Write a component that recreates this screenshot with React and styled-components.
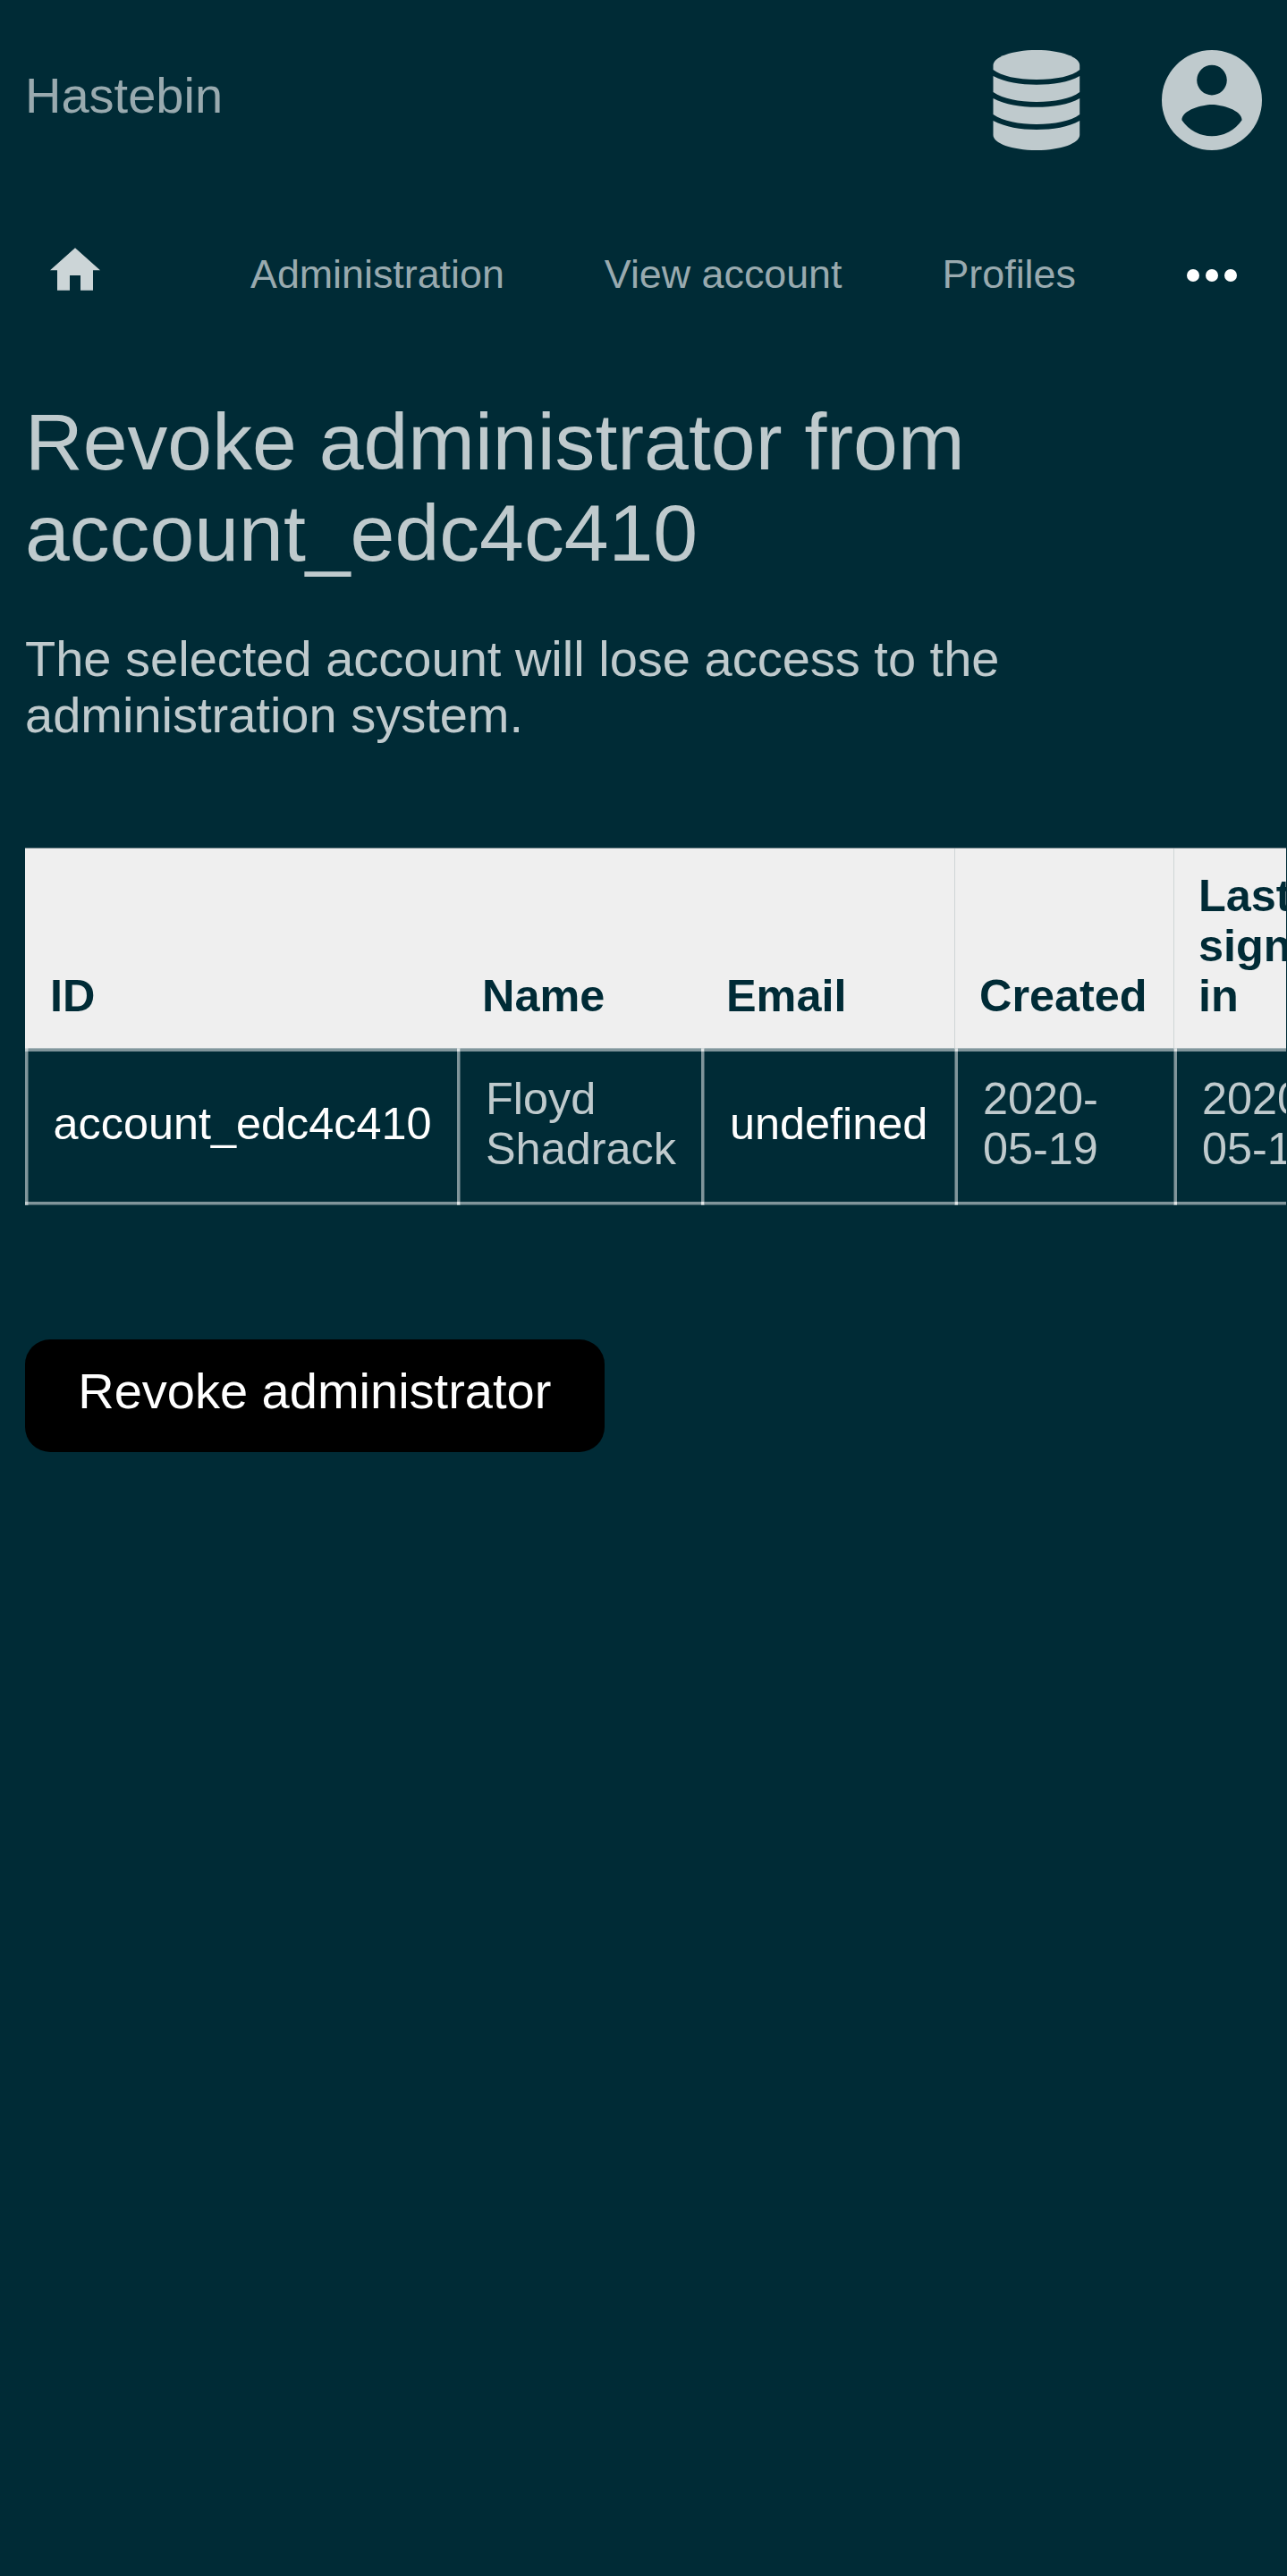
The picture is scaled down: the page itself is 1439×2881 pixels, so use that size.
import React from "react";
import styled, { createGlobalStyle } from "styled-components";

const GlobalStyle = createGlobalStyle`
  * { box-sizing: border-box; }
  html, body { margin: 0; background: #002b36; }
  body {
    font-family: "Liberation Sans", Arial, sans-serif;
    font-size: 56px;
    line-height: 63px;
    color: #bfcacd;
    overflow: hidden;
  }
`;

const Page = styled.div`
  width: 1439px;
  height: 2881px;
  overflow: hidden;
  background: #002b36;
`;

const Header = styled.header`
  display: flex;
  align-items: flex-start;
  justify-content: space-between;
  height: 224px;
  padding: 56px 28.5px 0 28px;
`;

const Brand = styled.a`
  margin-top: 19px;
  color: #99aaaf;
`;

const Tools = styled.div`
  display: flex;
  gap: 84px;
`;

const ToolIcon = styled.svg`
  display: block;
  width: ${(p) => p.$width}px;
  height: 112px;
  fill: #bfcacd;
`;

const Nav = styled.nav`
  display: flex;
  height: 168px;
  padding: 0 56.5px 0 56px;
  font-size: 44.8px;
  line-height: 52px;
`;

const HomeIcon = styled.svg`
  flex: none;
  width: 56px;
  height: 48px;
  margin: 53px 168px 0 0;
  fill: #ccd5d7;
`;

const NavLink = styled.a`
  margin: 56px 112px 0 0;
  color: #99aaaf;
  white-space: nowrap;

  &:last-of-type {
    margin-right: 0;
  }
`;

const MoreIcon = styled.svg`
  flex: none;
  width: 56px;
  height: 14px;
  margin: 77px 0 0 auto;
  fill: #fff;
`;

const Title = styled.h1`
  margin: 0;
  padding: 51px 28px 0;
  font-size: 89.6px;
  font-weight: 400;
  line-height: 102px;
`;

const Lead = styled.p`
  margin: 0;
  padding: 58px 28px 0;
`;

const TableScroller = styled.div`
  width: 1438px;
  margin-top: 117px;
  padding-left: 28px;
  overflow: hidden;
`;

const Table = styled.table`
  width: 1560px;
  table-layout: fixed;
  border-spacing: 0;
  font-size: 50.4px;
  line-height: 56px;
`;

const Col = styled.col`
  width: ${(p) => p.$width}px;
`;

const HeadCell = styled.th`
  height: 224px;
  padding: 25px 0 30px 28px;
  background: #efefef;
  border-top: 1px solid #78898f;
  box-shadow: inset ${(p) => (p.$divided ? 1 : 0)}px 0 #cfd5d6;
  color: #002b36;
  text-align: left;
  vertical-align: bottom;
`;

const line = "rgba(255, 255, 255, 0.5)";
const soft = "rgba(255, 255, 255, 0.25)";

const Cell = styled.td`
  height: 176px;
  padding: 4px 0 11px ${(p) => (p.$first ? 31.5 : 32)}px;
  background-repeat: no-repeat;
  background-image:
    linear-gradient(${line}, ${line}),
    linear-gradient(${line}, ${line}),
    linear-gradient(
      to right,
      ${(p) =>
        p.$softStart
          ? `${soft} 1px, ${line} 1px, ${line} 4px`
          : `${line} 3px, ${soft} 3px, ${soft} 4px`}
    ),
    linear-gradient(rgba(255, 255, 255, 0.66) 1px, ${line} 1px, ${line} 4px),
    linear-gradient(${line} 3px, ${soft} 3px, ${soft} 4px);
  background-size:
    ${(p) => (p.$first ? "0 0" : "3px 3px")},
    ${(p) => (p.$first ? "0 0" : "3px 3px")},
    4px 100%,
    100% 4px,
    100% 4px;
  background-position:
    ${(p) => (p.$softStart ? 1 : 0)}px 1px,
    ${(p) => (p.$softStart ? 1 : 0)}px 172px,
    0 0,
    0 0,
    0 100%;
  color: ${(p) => (p.$strong ? "#fff" : "#bfcacd")};
  vertical-align: middle;
`;

const Submit = styled.button`
  display: block;
  width: 647.5px;
  height: 126px;
  margin: 150px 0 0 28px;
  padding: 0 0 11px;
  border: 0;
  border-radius: 28px;
  background: #000;
  color: #fff;
  font: inherit;
`;

const columns = [
  { label: "ID", width: 483 },
  { label: "Name", width: 273 },
  { label: "Email", width: 283 },
  { label: "Created", width: 245, divided: true },
  { label: "Last sign in", width: 276, divided: true, lines: ["Last", "sign", "in"] },
];

const Lines = ({ items }) =>
  items.map((text, i) => (
    <React.Fragment key={text}>
      {i > 0 && <br />}
      {text}
    </React.Fragment>
  ));

export default function App() {
  return (
    <>
      <GlobalStyle />
      <Page>
        <Header>
          <Brand>Hastebin</Brand>
          <Tools>
            <ToolIcon $width={112} viewBox="0 0 112 112">
              <path d="M7.500 17 C7.500 8 28 0 56 0 S104.200 8 104.200 17 V22 C96 29 78 33 56 33 S17 29 7.500 22Z" />
              <path d="M7.500 29 C21 36 38 38.700 56 38.700 S92 36 104.200 29 V47 C94 54.500 76 58 56 58 S19 54.500 7.500 47Z" />
              <path d="M7.500 54 C21 61 38 63.800 56 63.800 S92 61 104.200 54 V72 C94 79.500 76 83 56 83 S19 79.500 7.500 72Z" />
              <path d="M7.500 79 C21 86 38 89 56 89 S92 86 104.200 79 V95 C104 104 84 112 56 112 S7.500 104 7.500 95Z" />
            </ToolIcon>
            <ToolIcon $width={112} viewBox="0 0 112 112">
              <path
                fillRule="evenodd"
                d="M56 0a56 56 0 1 0 0 112A56 56 0 0 0 56 0Zm0 16.800a16.800 16.800 0 1 1 0 33.600 16.800 16.800 0 0 1 0-33.600Zm0 79.500a40.300 40.300 0 0 1-33.600-18c.2-11.100 22.400-17.200 33.600-17.200s33.400 6.100 33.600 17.200a40.300 40.300 0 0 1-33.600 18Z"
              />
            </ToolIcon>
          </Tools>
        </Header>
        <Nav>
          <HomeIcon viewBox="0 0 56 48">
            <path d="M28 0.200 56 25.200H48V47.700H34V31H22V47.700H8V25.200H0Z" />
          </HomeIcon>
          <NavLink>Administration</NavLink>
          <NavLink>View account</NavLink>
          <NavLink>Profiles</NavLink>
          <MoreIcon viewBox="0 0 56 14">
            <circle cx="7" cy="7" r="7" />
            <circle cx="28" cy="7" r="7" />
            <circle cx="49" cy="7" r="7" />
          </MoreIcon>
        </Nav>
        <main>
          <Title>
            <Lines items={["Revoke administrator from", "account_edc4c410"]} />
          </Title>
          <Lead>
            <Lines items={["The selected account will lose access to the", "administration system."]} />
          </Lead>
          <TableScroller>
            <Table>
              <colgroup>
                {columns.map((c) => (
                  <Col key={c.label} $width={c.width} />
                ))}
              </colgroup>
              <thead>
                <tr>
                  {columns.map((c) => (
                    <HeadCell key={c.label} $divided={c.divided}>
                      <Lines items={c.lines || [c.label]} />
                    </HeadCell>
                  ))}
                </tr>
              </thead>
              <tbody>
                <tr>
                  <Cell $strong $first>account_edc4c410</Cell>
                  <Cell>
                    <Lines items={["Floyd", "Shadrack"]} />
                  </Cell>
                  <Cell $strong>undefined</Cell>
                  <Cell $softStart>
                    <Lines items={["2020-", "05-19"]} />
                  </Cell>
                  <Cell $softStart>
                    <Lines items={["2020-", "05-19"]} />
                  </Cell>
                </tr>
              </tbody>
            </Table>
          </TableScroller>
          <Submit>Revoke administrator</Submit>
        </main>
      </Page>
    </>
  );
}
